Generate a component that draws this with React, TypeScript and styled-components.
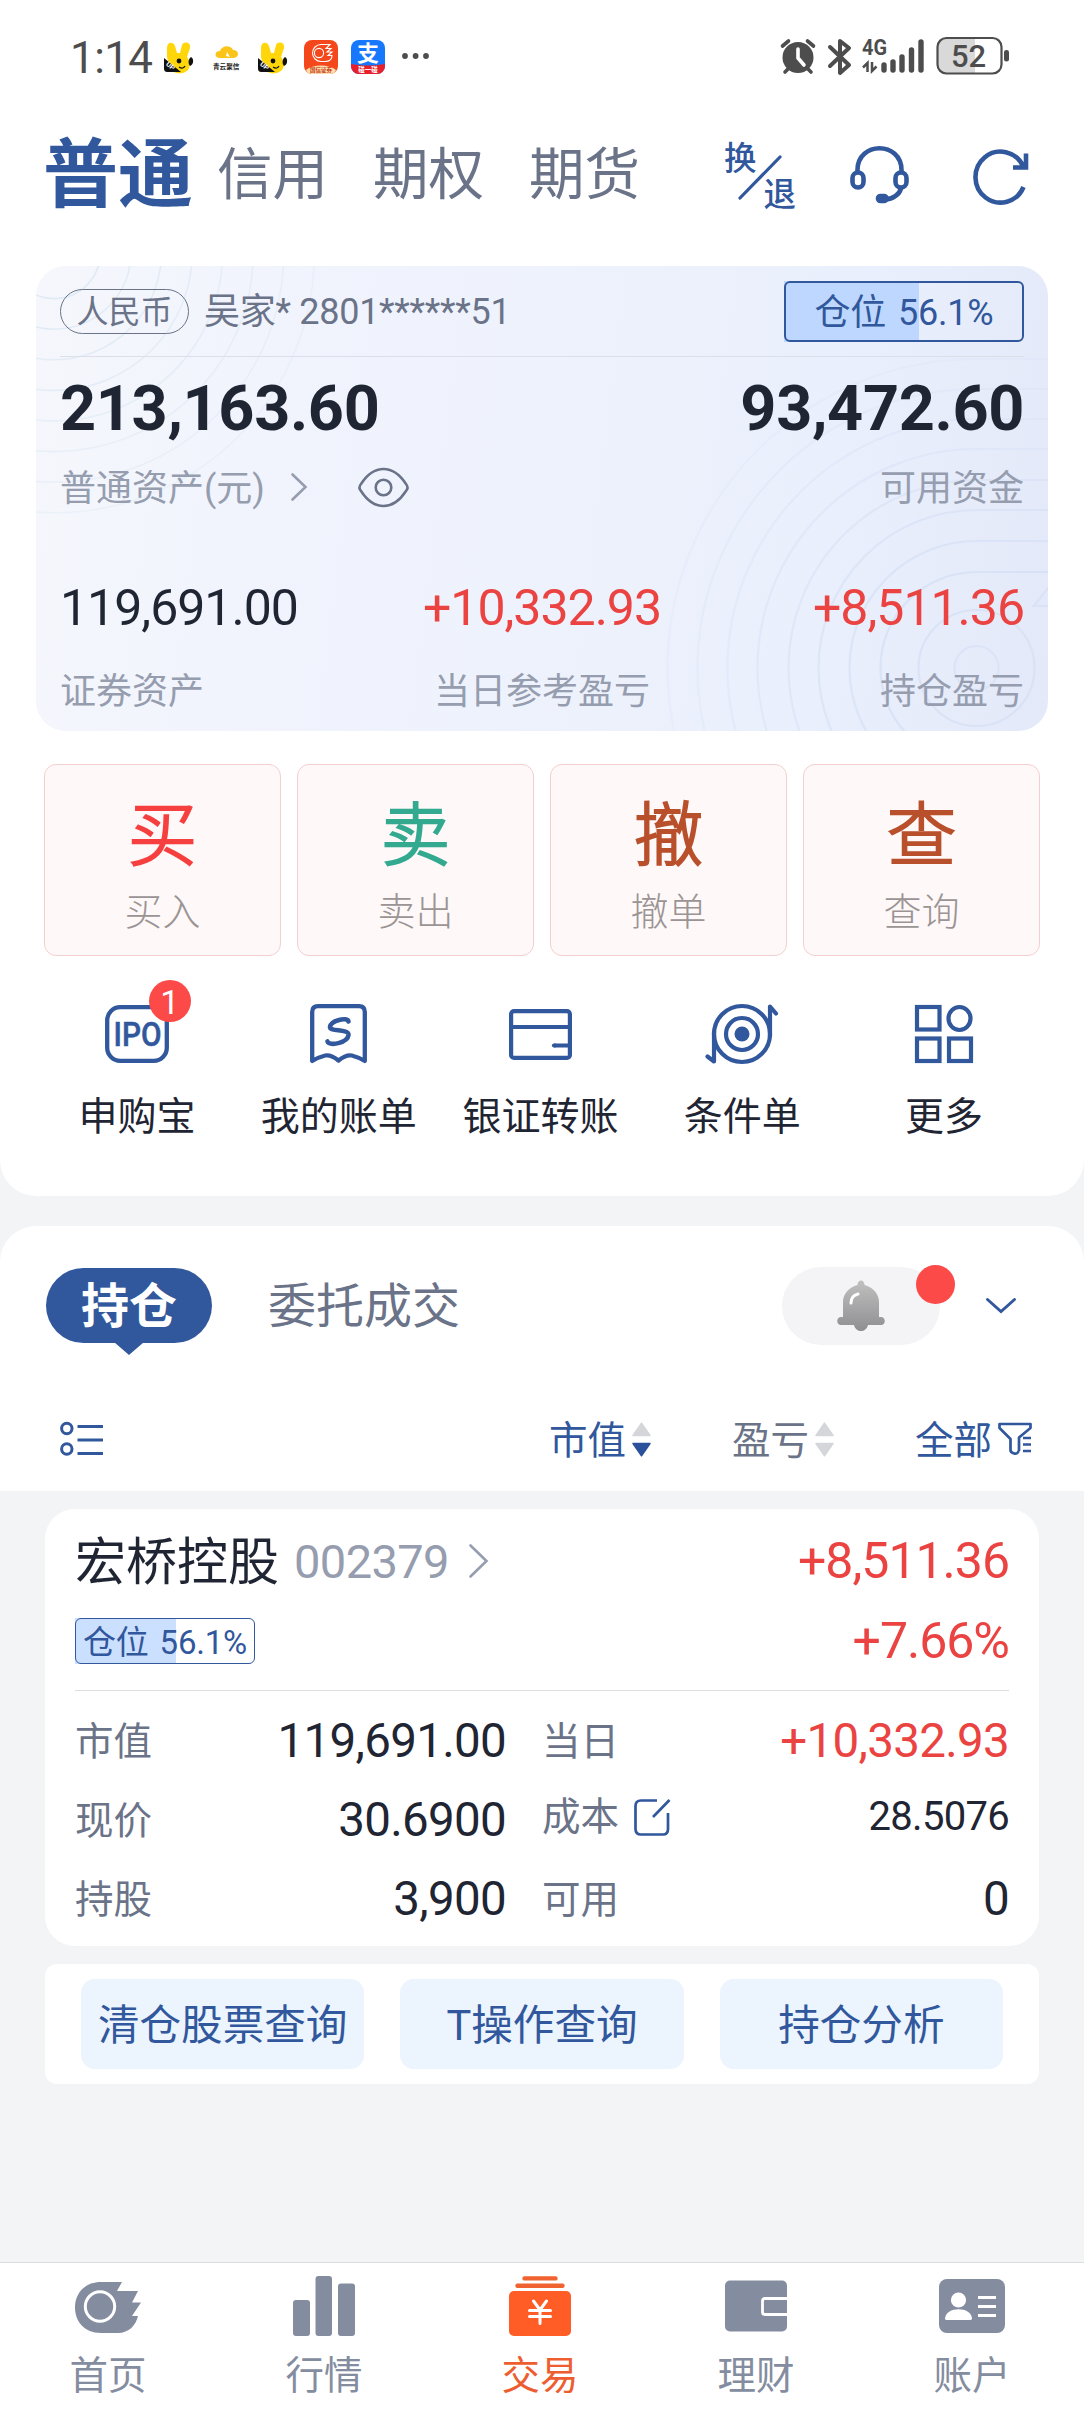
import React from "react";
import styled, { createGlobalStyle } from "styled-components";

const BLUE = "#31579c";
const INK = "#1f2533";
const SLATE = "#6a7388";
const MUTED = "#959daf";
const RED = "#ea4341";
const PAGE = "#f3f4f6";
const NAV = "#848da0";

const GlobalStyle = createGlobalStyle`
  * { box-sizing: border-box; }
  body {
    margin: 0;
    background: ${PAGE};
    font-family: Roboto, "Noto Sans CJK SC", sans-serif;
    color: ${INK};
  }
  svg { display: block; flex: none; overflow: visible; }
`;

const Screen = styled.div`
  width: 1084px;
  height: 2412px;
  display: flex;
  flex-direction: column;
  background: ${PAGE};
  overflow: hidden;
`;

const TopPanel = styled.section`
  height: 1196px;
  background: #fff;
  border-radius: 0 0 36px 36px;
`;

/* ---------- status bar ---------- */
const StatusBar = styled.div`
  height: 114px;
  padding: 0 74px 0 70px;
  display: flex;
  justify-content: space-between;
  align-items: center;
`;
const StatusGroup = styled.div`
  display: flex;
  align-items: center;
`;
const Clock = styled.span`
  width: 92px;
  padding-top: 1px;
  font-size: 44px;
  line-height: 50px;
  letter-spacing: -0.6px;
  color: #4d4d4d;
`;

/* ---------- header ---------- */
const Header = styled.header`
  height: 122px;
  padding: 0 56px 0 43px;
  display: flex;
  justify-content: space-between;
  align-items: center;
`;
const Accounts = styled.nav`
  display: flex;
  align-items: center;
`;
const AccountTab = styled.span<{ $active?: boolean }>`
  padding-top: ${(p) => (p.$active ? 0 : 2)}px;
  font-size: ${(p) => (p.$active ? 75 : 55.5)}px;
  font-weight: ${(p) => (p.$active ? 700 : 400)};
  color: ${(p) => (p.$active ? BLUE : SLATE)};
  line-height: 80px;
  margin-right: ${(p) => (p.$active ? 24 : 45)}px;
`;
const HeaderTools = styled.div`
  display: flex;
  align-items: center;
`;

/* ---------- asset card ---------- */
const AssetCard = styled.section`
  position: relative;
  margin: 30px 36px 0;
  height: 465px;
  padding: 0 24px;
  border-radius: 30px;
  overflow: hidden;
  background: linear-gradient(97deg, #f5f7fc 0%, #f1f4fd 22%, #eef2fc 50%, #e9effc 78%, #e4e9f9 100%);
`;
const Rings = styled.svg`
  position: absolute;
  left: 0;
  top: 0;
`;
const Row = styled.div<{ $h: number; $mt?: number }>`
  position: relative;
  height: ${(p) => p.$h}px;
  margin-top: ${(p) => p.$mt ?? 0}px;
  display: flex;
  justify-content: space-between;
  align-items: center;
`;
const OwnerRow = styled(Row)`
  border-bottom: 1px solid #dadfe9;
`;
const Inline = styled.div`
  display: flex;
  align-items: center;
`;
const Currency = styled.span`
  width: 129px;
  height: 45px;
  margin-right: 15px;
  border: 1.5px solid ${SLATE};
  border-radius: 23px;
  font-size: 32px;
  line-height: 45px;
  text-align: center;
  color: ${SLATE};
`;
const Owner = styled.span`
  padding-top: 2px;
  font-size: 36px;
  line-height: 44px;
  letter-spacing: -0.28px;
  color: ${SLATE};
`;
const BigNumber = styled.span`
  padding-top: 2px;
  font-size: 63px;
  font-weight: 700;
  line-height: 70px;
  letter-spacing: -0.35px;
`;
const CardLabel = styled.span`
  padding-top: 3px;
  font-size: 36px;
  line-height: 40px;
  color: ${MUTED};
`;
const AssetLabel = styled(CardLabel)`
  margin-right: 26px;
`;
const EyeButton = styled.div`
  margin-left: 51px;
`;
const Figure = styled.span<{ $up?: boolean }>`
  font-size: 50px;
  line-height: 50px;
  letter-spacing: -1px;
  color: ${(p) => (p.$up ? RED : INK)};
`;
const Triple = styled.div<{ $h: number; $mt: number }>`
  position: relative;
  display: grid;
  grid-template-columns: 1fr 240px 1fr;
  align-items: center;
  height: ${(p) => p.$h}px;
  margin-top: ${(p) => p.$mt}px;
  > :nth-child(2) { text-align: center; }
  > :nth-child(3) { text-align: right; }
`;

/* ---------- position meter ---------- */
const Meter = styled.div<{ $small?: boolean }>`
  position: relative;
  width: ${(p) => (p.$small ? 180 : 240)}px;
  height: ${(p) => (p.$small ? 46 : 61)}px;
`;
const MeterFill = styled.div<{ $small?: boolean }>`
  position: absolute;
  left: 0;
  top: 0;
  bottom: 0;
  background: ${(p) => (p.$small ? "#cbe0fe" : "#bed7fe")};
`;
const MeterFrame = styled.div<{ $small?: boolean }>`
  position: relative;
  height: 100%;
  padding-top: ${(p) => (p.$small ? 2 : 3)}px;
  display: flex;
  align-items: center;
  justify-content: center;
  border: ${(p) => (p.$small ? 1 : 2)}px solid ${BLUE};
  border-radius: 6px;
  color: ${BLUE};
  font-size: ${(p) => (p.$small ? 33 : 36)}px;
  letter-spacing: -0.2px;
  word-spacing: 3px;
  line-height: 1;
  white-space: nowrap;
`;

/* ---------- trade buttons ---------- */
const TradeGrid = styled.div`
  margin: 33px 44px 0;
  display: grid;
  grid-template-columns: repeat(4, 1fr);
  gap: 16px;
`;
const TradeButton = styled.div`
  height: 192px;
  padding-top: 34px;
  display: flex;
  flex-direction: column;
  align-items: center;
  background: #fef8f8;
  border: 1.5px solid #f4cfcf;
  border-radius: 12px;
`;
const TradeGlyph = styled.span<{ $color: string }>`
  font-size: 69px;
  font-weight: 300;
  line-height: 76px;
  color: ${(p) => p.$color};
  -webkit-text-stroke: 2.2px ${(p) => p.$color};
  stroke-linejoin: round;
`;
const TradeLabel = styled.span`
  margin-top: 17px;
  font-size: 38px;
  font-weight: 300;
  line-height: 40px;
  color: #9b9494;
`;

/* ---------- shortcuts ---------- */
const Shortcuts = styled.div`
  margin: 0 39px 0 36px;
  display: grid;
  grid-template-columns: repeat(5, 1fr);
`;
const Shortcut = styled.div`
  display: flex;
  flex-direction: column;
  align-items: center;
`;
const ShortcutIcon = styled.div`
  position: relative;
  height: 100px;
  margin-top: 28px;
  display: flex;
  align-items: center;
`;
const Count = styled.span`
  position: absolute;
  left: 44px;
  top: -4px;
  width: 42px;
  height: 42px;
  border-radius: 50%;
  background: #fc4a48;
  color: #fff;
  font-size: 34px;
  line-height: 44px;
  text-align: center;
`;
const ShortcutLabel = styled.span`
  margin-top: 13px;
  font-size: 39px;
  line-height: 40px;
  white-space: nowrap;
`;

/* ---------- holdings panel ---------- */
const HoldPanel = styled.section`
  margin-top: 30px;
  height: 265px;
  background: #fff;
  border-radius: 36px 36px 0 0;
`;
const TabRow = styled.div`
  height: 159px;
  padding: 0 68px 0 46px;
  display: flex;
  justify-content: space-between;
  align-items: center;
`;
const ActiveTab = styled.div`
  position: relative;
  width: 166px;
  height: 75px;
  border-radius: 38px;
  background: ${BLUE};
  color: #fff;
  font-size: 48px;
  font-weight: 700;
  line-height: 77px;
  text-align: center;
  &::after {
    content: "";
    position: absolute;
    left: 68px;
    top: 74px;
    border: 15px solid transparent;
    border-top: 13px solid ${BLUE};
    border-bottom: 0;
  }
`;
const Tab = styled.span`
  margin-left: 56px;
  padding-top: 2px;
  font-size: 48px;
  line-height: 77px;
  color: ${SLATE};
`;
const BellPill = styled.div`
  position: relative;
  width: 158px;
  height: 78px;
  margin-right: 46px;
  border-radius: 39px;
  background: #f4f4f6;
  display: flex;
  align-items: center;
  justify-content: center;
`;
const Dot = styled.i`
  position: absolute;
  right: -15px;
  top: -2px;
  width: 39px;
  height: 39px;
  border-radius: 50%;
  background: #fc4a48;
`;
const FilterRow = styled.div`
  height: 106px;
  padding: 2px 52px 0 60px;
  display: flex;
  align-items: center;
`;
const Filters = styled.div`
  margin-left: auto;
  display: flex;
  align-items: center;
  gap: 81px;
`;
const FilterItem = styled.div<{ $muted?: boolean }>`
  display: flex;
  align-items: center;
  gap: 6px;
  font-size: 38.5px;
  line-height: 44px;
  white-space: nowrap;
  color: ${(p) => (p.$muted ? SLATE : BLUE)};
  > span { padding-top: 3px; }
`;

/* ---------- stock card ---------- */
const StockCard = styled.section`
  margin: 18px 45px 0;
  height: 437px;
  padding: 0 30px;
  background: #fff;
  border-radius: 30px;
`;
const StockName = styled.span`
  font-size: 51px;
  line-height: 60px;
  padding-top: 3px;
  margin-right: 15px;
`;
const StockCode = styled.span`
  font-size: 47px;
  line-height: 60px;
  padding-top: 1px;
  letter-spacing: -0.6px;
  margin-right: 20px;
  color: ${MUTED};
`;
const Rule = styled.div`
  height: 1px;
  margin-top: 21px;
  background: #dedfe1;
`;
const Details = styled.div`
  margin-top: 10px;
  display: grid;
  grid-template-columns: 431px 467px;
  column-gap: 36px;
  grid-auto-rows: 79px;
`;
const Cell = styled.div`
  display: flex;
  justify-content: space-between;
  align-items: center;
`;
const CellLabel = styled.span<{ $raised?: boolean }>`
  display: flex;
  align-items: center;
  gap: 15px;
  padding: ${(p) => (p.$raised ? "0 0 5px" : "2px 0 0")};
  font-size: 38.5px;
  line-height: 44px;
  color: ${SLATE};
`;
const CellValue = styled.span<{ $up?: boolean; $small?: boolean }>`
  padding-bottom: ${(p) => (p.$small ? 6 : 0)}px;
  font-size: ${(p) => (p.$small ? 40 : 47.5)}px;
  letter-spacing: -0.7px;
  line-height: 50px;
  color: ${(p) => (p.$up ? RED : INK)};
`;

/* ---------- query panel ---------- */
const QueryPanel = styled.section`
  margin: 18px 45px 0;
  height: 120px;
  padding: 15px 36px;
  display: grid;
  grid-template-columns: repeat(3, 1fr);
  gap: 36px;
  background: #fff;
  border-radius: 12px;
`;
const QueryButton = styled.div`
  height: 90px;
  border-radius: 14px;
  background: #ecf4fe;
  color: ${BLUE};
  font-size: 41.6px;
  line-height: 93px;
  text-align: center;
  white-space: nowrap;
`;

/* ---------- bottom navigation ---------- */
const BottomNav = styled.nav`
  margin-top: auto;
  height: 150px;
  padding-right: 4px;
  display: grid;
  grid-template-columns: repeat(5, 1fr);
  background: #fff;
  border-top: 1px solid #dcdde0;
`;
const NavItem = styled.div<{ $active?: boolean }>`
  display: flex;
  flex-direction: column;
  align-items: center;
  color: ${(p) => (p.$active ? "#ee5d2f" : NAV)};
  font-size: 38.5px;
  line-height: 44px;
  svg { margin: 13px 0 18px; }
`;

/* ---------- icons ---------- */
const Bee = () => (
  <svg width="32" height="34" viewBox="0 0 32 34">
    <path d="M5 8C5 2 11 1 13 6l2 7h3l2-8c2-4 9-3 8 3l-3 9c4 4 4 13-2 15-5 3-12 1-15-3L5 17z" fill="#ffd60a" />
    <path d="M2 18l17 14H6c-3 0-4-1-4-4zM29 17c3 1 3 8-1 9-2-2-2-7 1-9z" fill="#111" />
    <circle cx="17" cy="21" r="2.4" fill="#111" />
    <path d="M17 27c3 2 5 1 6-1" fill="none" stroke="#111" strokeWidth="1.2" />
    <text x="3" y="26" fontSize="7" fontWeight="700" fill="#fff" transform="rotate(42 5 26)">UP</text>
  </svg>
);

const CloudApp = () => (
  <svg width="27" height="34" viewBox="0 0 27 34">
    <path d="M7 18c-6 0-6-7 0-7 2-6 11-6 13-1 6 0 7 7 1 8z" fill="#fbc418" />
    <path d="M14 12l3 5-4-1z" fill="#fff" />
    <text x="0" y="29" fontSize="6.6" fontWeight="700" fill="#222">青云聚信</text>
  </svg>
);

const BrokerApp = () => (
  <svg width="34" height="34" viewBox="0 0 34 34">
    <rect width="34" height="34" rx="8" fill="#f4481c" />
    <path d="M2 30c7-6 23-6 30 0-1 3-3 4-6 4H8c-3 0-5-1-6-4z" fill="#fddcae" />
    <path d="M26 4.500h-9a8.500 8.500 0 1 0 0 17h4c5 0 7-3 7-6h-4l4-3.500h-5l4-3.500h-5z" fill="none" stroke="#fff" strokeWidth="1.100" />
    <circle cx="15" cy="13" r="4.600" fill="none" stroke="#fff" strokeWidth="1.100" />
    <text x="6" y="32" fontSize="5.500" fontWeight="700" fill="#c33a10">国信证券</text>
  </svg>
);

const PayApp = () => (
  <svg width="34" height="34" viewBox="0 0 34 34">
    <rect width="34" height="34" rx="8" fill="#1677ff" />
    <path d="M0 24q17 3 34 0v2a8 8 0 0 1-8 8H8a8 8 0 0 1-8-8z" fill="#e7202b" />
    <text x="17" y="21" fontSize="22" fontWeight="700" fill="#fff" textAnchor="middle">支</text>
    <text x="17" y="32" fontSize="6.500" fontWeight="700" fill="#fff" textAnchor="middle">碰一碰</text>
  </svg>
);

const MoreDots = () => (
  <svg width="28" height="8" viewBox="0 0 28 8" fill="#4d4d4d">
    <circle cx="3" cy="3" r="2.900" />
    <circle cx="13.600" cy="3" r="2.900" />
    <circle cx="24" cy="3" r="2.900" />
  </svg>
);

const StatusIcons = () => (
  <svg width="230" height="40" viewBox="781 37 230 40" fill="#4d4d4d">
    <circle cx="799" cy="57.500" r="15.500" />
    <path d="M783.500 46l6-5M814.500 46l-6-5M786 72l5-5M812 72l-5-5" stroke="#4d4d4d" strokeWidth="3.600" strokeLinecap="round" />
    <path d="M799 49v9l6 7" fill="none" stroke="#fff" strokeWidth="3.600" strokeLinecap="round" />
    <path d="M831 47l19 18-9 8V41l9 7-19 18" fill="none" stroke="#4d4d4d" strokeWidth="4" strokeLinejoin="round" strokeLinecap="round" />
    <text x="863" y="55" fontSize="21.500" fontWeight="700" textLength="25" lengthAdjust="spacingAndGlyphs">4G</text>
    <path d="M868.500 72v-9l-4.500 4.500M873 62v9l4.500-4.500" fill="none" stroke="#4d4d4d" strokeWidth="2.500" />
    <path d="M885 65v5M894 62v8M903 57v13M912.500 50v20M922 42v28" stroke="#4d4d4d" strokeWidth="5.400" strokeLinecap="round" />
    <path d="M945 39h31v34h-31a7 7 0 0 1-7-7V46a7 7 0 0 1 7-7z" fill="#d9d9d9" />
    <rect x="938.500" y="38" width="64" height="35.500" rx="9" fill="none" stroke="#4d4d4d" strokeWidth="2.200" />
    <rect x="1005" y="50" width="5" height="11.500" rx="2.300" />
    <text x="969.500" y="67" fontSize="31" fontWeight="500" textAnchor="middle">52</text>
  </svg>
);

const HeaderIcons = () => (
  <svg width="304" height="70" viewBox="724 140 304 70" fill="none" stroke={BLUE}>
    <g fill={BLUE} stroke="none" fontSize="32.500" fontWeight="500">
      <text x="724" y="170">换</text>
      <text x="763.500" y="206">退</text>
    </g>
    <path d="M740 198l40-41" strokeWidth="3.200" strokeLinecap="round" />
    <g strokeWidth="4.600">
      <path d="M857.500 171v-1c0-29 44-29 44 0v1" />
      <rect x="852.500" y="172.500" width="11" height="15" rx="5.500" />
      <rect x="895.500" y="172.500" width="11" height="15" rx="5.500" />
      <path d="M901 188c-1 6-8 11-16 11.500" />
      <rect x="878" y="196" width="8.500" height="5" rx="2.500" fill={BLUE} />
      <path d="M1023.500 187A25 25.500 0 1 1 1023 166M1026 153.500v14h-13" />
    </g>
  </svg>
);

const leftRings = Array.from({ length: 8 }, (_, i) => 46 + i * 30.6);
const rightRings = [96, 127, 158, 188, 219, 249, 279, 309];

const CardRings = () => (
  <Rings width="1012" height="465" viewBox="0 0 1012 465" fill="none">
    {leftRings.map((r, i) => (
      <circle key={r} cx="18.300" cy="-13.400" r={r} stroke="#cfe0ee" strokeOpacity={0.55 - i * 0.045} strokeWidth="1.600" />
    ))}
    <g stroke="#cfdcf3" strokeWidth="2.200">
      <circle cx="940.500" cy="402" r="22" strokeOpacity="0.450" />
      <circle cx="940.500" cy="402" r="58" strokeOpacity="0.550" />
      {rightRings.map((r, i) => (
        <path key={r} d={`M1012 ${402 - r}H940.500A${r} ${r} 0 0 0 940.500 ${402 + r}`} strokeOpacity={0.58 - i * 0.06} />
      ))}
      <path d="M1012 322l-14 18h14" strokeOpacity="0.500" />
    </g>
  </Rings>
);

const Chevron = ({ w, h, color, stroke = 2.6 }: { w: number; h: number; color: string; stroke?: number }) => (
  <svg width={w} height={h} viewBox={`0 0 ${w} ${h}`}>
    <path d={`M1.500 1.500L${w - 1.5} ${h / 2}L1.500 ${h - 1.5}`} fill="none" stroke={color} strokeWidth={stroke} strokeLinecap="round" />
  </svg>
);

const Eye = () => (
  <svg width="51" height="41" viewBox="0 0 51 41" fill="none" stroke={SLATE} strokeWidth="2.600">
    <path d="M3 17C16-3 35-3 48 17q3 3.500 0 7C35 44 16 44 3 24q-3-3.500 0-7z" />
    <circle cx="25.500" cy="20.500" r="7.800" />
  </svg>
);

const IpoIcon = () => (
  <svg width="64" height="58" viewBox="0 0 64 58">
    <rect x="2.200" y="2.200" width="59.600" height="53.600" rx="13" fill="none" stroke={BLUE} strokeWidth="4.300" />
    <text x="8.500" y="41" fontSize="33" fontWeight="500" fill={BLUE} stroke={BLUE} strokeWidth="0.500" textLength="48" lengthAdjust="spacingAndGlyphs">IPO</text>
  </svg>
);

const BillIcon = () => (
  <svg width="57" height="60" viewBox="0 0 57 60">
    <path d="M2.200 57V8q0-5.800 5.800-5.800h41q5.800 0 5.800 5.800V57q-7-4-13-5.500-6-1-13.300 5-7.300-6-13.300-5Q9 53 2.200 57z" fill="none" stroke={BLUE} strokeWidth="4.300" strokeLinejoin="round" />
    <path d="M38.500 17.500c-1-5-18-1-18.500 5.500-.3 5 19 1.500 18.500 8-1 8-19 11.500-21 6.500" fill="none" stroke={BLUE} strokeWidth="4.600" strokeLinecap="round" />
  </svg>
);

const BankIcon = () => (
  <svg width="63" height="51" viewBox="0 0 63 51" fill="none" stroke={BLUE} strokeWidth="4.200">
    <rect x="2.100" y="2.100" width="58.800" height="46.800" rx="3" />
    <path d="M2 18h59M61 36.500H45" />
    <path d="M46 36.500h-1" strokeLinecap="round" />
  </svg>
);

const TargetIcon = () => (
  <svg width="72" height="60" viewBox="0 0 72 60" fill="none" stroke={BLUE} strokeWidth="4.200">
    <circle cx="36" cy="30" r="28" />
    <circle cx="36" cy="30" r="16" />
    <circle cx="36" cy="30" r="7.500" fill={BLUE} stroke="none" />
    <path d="M64 32V2.500l6 7M8 28v29.500l-6.500-5" strokeLinecap="round" strokeLinejoin="round" />
  </svg>
);

const GridIcon = () => (
  <svg width="58" height="58" viewBox="0 0 58 58" fill="none" stroke={BLUE} strokeWidth="4.200">
    <rect x="2" y="2" width="22.500" height="22.500" />
    <ellipse cx="44.500" cy="13.500" rx="11" ry="11.500" />
    <rect x="2" y="33.500" width="22.500" height="22.500" />
    <rect x="34" y="33.500" width="22" height="22.500" />
  </svg>
);

const BellIcon = () => (
  <svg width="48" height="51" viewBox="0 0 48 51">
    <defs>
      <linearGradient id="bell" x1="0" y1="0" x2="0" y2="1">
        <stop offset="0" stopColor="#c0c0c0" />
        <stop offset="1" stopColor="#8f8f92" />
      </linearGradient>
    </defs>
    <path d="M20.500 5c0-6 7-6 7 0C36 7 42 14 42 22v15h2c5 0 5 8 0 8H31c-2 8-12 8-14 0H4c-5 0-5-8 0-8h2V22C6 14 12 7 20.500 5z" fill="url(#bell)" />
    <path d="M14 23c0-5 3-8 7-9" fill="none" stroke="#fff" strokeWidth="3" strokeLinecap="round" />
  </svg>
);

const DownIcon = () => (
  <svg width="30" height="16" viewBox="0 0 30 16">
    <path d="M1.500 1.500L15 13.500 28.500 1.500" fill="none" stroke={BLUE} strokeWidth="3" strokeLinecap="round" />
  </svg>
);

const ListIcon = () => (
  <svg width="44" height="36" viewBox="0 0 44 36" fill="none" stroke={BLUE} strokeWidth="3">
    <circle cx="6.800" cy="7.500" r="5.200" />
    <circle cx="6.800" cy="28" r="5.200" />
    <path d="M17.500 5.500H43M17.500 19H43M17.500 32.500H43" />
  </svg>
);

const SortIcon = ({ down }: { down?: boolean }) => (
  <svg width="19" height="35" viewBox="0 0 19 35" strokeLinejoin="round" strokeWidth="1.500">
    <path d="M9.500 1.200L18 13.500H1z" fill="#d4d6d9" stroke="#d4d6d9" />
    <path d="M9.500 33.800L18 21.500H1z" fill={down ? "#2b519a" : "#d4d6d9"} stroke={down ? "#2b519a" : "#d4d6d9"} />
  </svg>
);

const FunnelIcon = () => (
  <svg width="34" height="34" viewBox="0 0 34 34" fill="none" stroke={BLUE} strokeWidth="2.700" strokeLinejoin="round">
    <path d="M20.500 29c-1 5-8 2-8-1V17L1.500 6V2h31v4L21 15.500V29" />
    <path d="M25 16h8M25 22.500h8M25 29h8" />
  </svg>
);

const EditIcon = () => (
  <svg width="36" height="37" viewBox="0 0 36 37" fill="none" stroke={BLUE} strokeWidth="2.700">
    <path d="M23 1.500H7Q1.500 1.500 1.500 7v23Q1.500 35.500 7 35.500h22q5 0 5-5.500V14M19 18L35.500 1" />
  </svg>
);

const HomeNav = () => (
  <svg width="66" height="60" viewBox="0 0 66 60">
    <path d="M26 6h21l-5 9h21l-6 11.500h9L57 40h6c-2 9-9 17-20 17H26C9 57 0 45 0 31.500S9 6 26 6z" fill={NAV} />
    <circle cx="25" cy="30.500" r="14.700" fill="none" stroke="#fff" strokeWidth="3" />
  </svg>
);

const QuoteNav = () => (
  <svg width="62" height="60" viewBox="0 0 62 60" fill={NAV}>
    <rect x="0" y="24" width="17" height="36" rx="3" />
    <rect x="22.500" y="0" width="16.500" height="60" rx="3" />
    <rect x="45" y="7.500" width="17" height="52.500" rx="3" />
  </svg>
);

const TradeNav = () => (
  <svg width="62" height="60" viewBox="0 0 62 60">
    <path d="M15.500 2.400h31M8.500 9.800h45" stroke="#f0622f" strokeWidth="4.400" strokeLinecap="round" />
    <rect x="0" y="15" width="62" height="45" rx="5" fill="#ff5c26" />
    <path d="M24.500 25l6.500 9 6.500-9M20.500 34.500h21M20.500 40.500h21M31 34v13.500" fill="none" stroke="#fff" strokeWidth="3" strokeLinecap="round" />
  </svg>
);

const WealthNav = () => (
  <svg width="62" height="60" viewBox="0 0 62 60">
    <rect x="0" y="4.500" width="62" height="51" rx="5" fill={NAV} />
    <path d="M62 22.500H40q-2.500 0-2.500 2.500v11q0 2.500 2.500 2.500h22" fill="none" stroke="#fff" strokeWidth="2.800" />
  </svg>
);

const ProfileNav = () => (
  <svg width="66" height="60" viewBox="0 0 66 60">
    <rect x="0" y="3" width="66" height="54" rx="8" fill={NAV} />
    <g fill="#fff">
      <circle cx="19.500" cy="24" r="7.600" />
      <path d="M6 43c0-13 27-13 27 0q-.5 1-2 1H8q-2 0-2-1z" />
      <path d="M39 20h18v3H39zM39 29h18v3H39zM39 38h18v3H39z" />
    </g>
  </svg>
);

/* ---------- composed parts ---------- */
const PositionMeter = ({ percent, small }: { percent: number; small?: boolean }) => (
  <Meter $small={small}>
    <MeterFill $small={small} style={{ width: `${percent}%` }} />
    <MeterFrame $small={small}>仓位 {percent}%</MeterFrame>
  </Meter>
);

const trades = [
  { glyph: "买", label: "买入", color: "#f5403f" },
  { glyph: "卖", label: "卖出", color: "#33aa90" },
  { glyph: "撤", label: "撤单", color: "#b9502c" },
  { glyph: "查", label: "查询", color: "#b9502c" },
];

const shortcuts = [
  { label: "申购宝", icon: <IpoIcon />, count: 1 },
  { label: "我的账单", icon: <BillIcon /> },
  { label: "银证转账", icon: <BankIcon /> },
  { label: "条件单", icon: <TargetIcon /> },
  { label: "更多", icon: <GridIcon /> },
];

const navItems = [
  { label: "首页", icon: <HomeNav /> },
  { label: "行情", icon: <QuoteNav /> },
  { label: "交易", icon: <TradeNav />, active: true },
  { label: "理财", icon: <WealthNav /> },
  { label: "账户", icon: <ProfileNav /> },
];

const AppTray = styled.div`
  display: flex;
  align-items: center;
  svg:nth-child(2) { margin: 0 16px 0 19px; }
  svg:nth-child(4) { margin: 0 13px 0 16px; }
  svg:nth-child(6) { margin-left: 17px; }
`;

export default function App() {
  return (
    <>
      <GlobalStyle />
      <Screen>
        <TopPanel>
          <StatusBar>
            <StatusGroup>
              <Clock>1:14</Clock>
              <AppTray>
                <Bee />
                <CloudApp />
                <Bee />
                <BrokerApp />
                <PayApp />
                <MoreDots />
              </AppTray>
            </StatusGroup>
            <StatusIcons />
          </StatusBar>

          <Header>
            <Accounts>
              <AccountTab $active>普通</AccountTab>
              <AccountTab>信用</AccountTab>
              <AccountTab>期权</AccountTab>
              <AccountTab>期货</AccountTab>
            </Accounts>
            <HeaderTools>
              <HeaderIcons />
            </HeaderTools>
          </Header>

          <AssetCard>
            <CardRings />
            <OwnerRow $h={91}>
              <Inline>
                <Currency>人民币</Currency>
                <Owner>吴家* 2801******51</Owner>
              </Inline>
              <PositionMeter percent={56.1} />
            </OwnerRow>
            <Row $h={102}>
              <BigNumber>213,163.60</BigNumber>
              <BigNumber>93,472.60</BigNumber>
            </Row>
            <Row $h={56}>
              <Inline>
                <AssetLabel>普通资产(元)</AssetLabel>
                <Chevron w={16} h={28} color={MUTED} />
                <EyeButton>
                  <Eye />
                </EyeButton>
              </Inline>
              <CardLabel>可用资金</CardLabel>
            </Row>
            <Triple $h={50} $mt={68}>
              <Figure>119,691.00</Figure>
              <Figure $up>+10,332.93</Figure>
              <Figure $up>+8,511.36</Figure>
            </Triple>
            <Triple $h={40} $mt={36}>
              <CardLabel>证券资产</CardLabel>
              <CardLabel>当日参考盈亏</CardLabel>
              <CardLabel>持仓盈亏</CardLabel>
            </Triple>
          </AssetCard>

          <TradeGrid>
            {trades.map((t) => (
              <TradeButton key={t.label}>
                <TradeGlyph $color={t.color}>{t.glyph}</TradeGlyph>
                <TradeLabel>{t.label}</TradeLabel>
              </TradeButton>
            ))}
          </TradeGrid>

          <Shortcuts>
            {shortcuts.map((s) => (
              <Shortcut key={s.label}>
                <ShortcutIcon>
                  {s.icon}
                  {s.count && <Count>{s.count}</Count>}
                </ShortcutIcon>
                <ShortcutLabel>{s.label}</ShortcutLabel>
              </Shortcut>
            ))}
          </Shortcuts>
        </TopPanel>

        <HoldPanel>
          <TabRow>
            <Inline>
              <ActiveTab>持仓</ActiveTab>
              <Tab>委托成交</Tab>
            </Inline>
            <Inline>
              <BellPill>
                <BellIcon />
                <Dot />
              </BellPill>
              <DownIcon />
            </Inline>
          </TabRow>
          <FilterRow>
            <ListIcon />
            <Filters>
              <FilterItem>
                <span>市值</span>
                <SortIcon down />
              </FilterItem>
              <FilterItem $muted>
                <span>盈亏</span>
                <SortIcon />
              </FilterItem>
              <FilterItem>
                <span>全部</span>
                <FunnelIcon />
              </FilterItem>
            </Filters>
          </FilterRow>
        </HoldPanel>

        <StockCard>
          <Row $h={104}>
            <Inline>
              <StockName>宏桥控股</StockName>
              <StockCode>002379</StockCode>
              <Chevron w={19} h={34} color={MUTED} />
            </Inline>
            <Figure $up>+8,511.36</Figure>
          </Row>
          <Row $h={56}>
            <PositionMeter percent={56.1} small />
            <Figure $up>+7.66%</Figure>
          </Row>
          <Rule />
          <Details>
            <Cell>
              <CellLabel>市值</CellLabel>
              <CellValue>119,691.00</CellValue>
            </Cell>
            <Cell>
              <CellLabel>当日</CellLabel>
              <CellValue $up>+10,332.93</CellValue>
            </Cell>
            <Cell>
              <CellLabel>现价</CellLabel>
              <CellValue>30.6900</CellValue>
            </Cell>
            <Cell>
              <CellLabel $raised>
                成本
                <EditIcon />
              </CellLabel>
              <CellValue $small>28.5076</CellValue>
            </Cell>
            <Cell>
              <CellLabel>持股</CellLabel>
              <CellValue>3,900</CellValue>
            </Cell>
            <Cell>
              <CellLabel>可用</CellLabel>
              <CellValue>0</CellValue>
            </Cell>
          </Details>
        </StockCard>

        <QueryPanel>
          <QueryButton>清仓股票查询</QueryButton>
          <QueryButton>T操作查询</QueryButton>
          <QueryButton>持仓分析</QueryButton>
        </QueryPanel>

        <BottomNav>
          {navItems.map((n) => (
            <NavItem key={n.label} $active={n.active}>
              {n.icon}
              {n.label}
            </NavItem>
          ))}
        </BottomNav>
      </Screen>
    </>
  );
}
